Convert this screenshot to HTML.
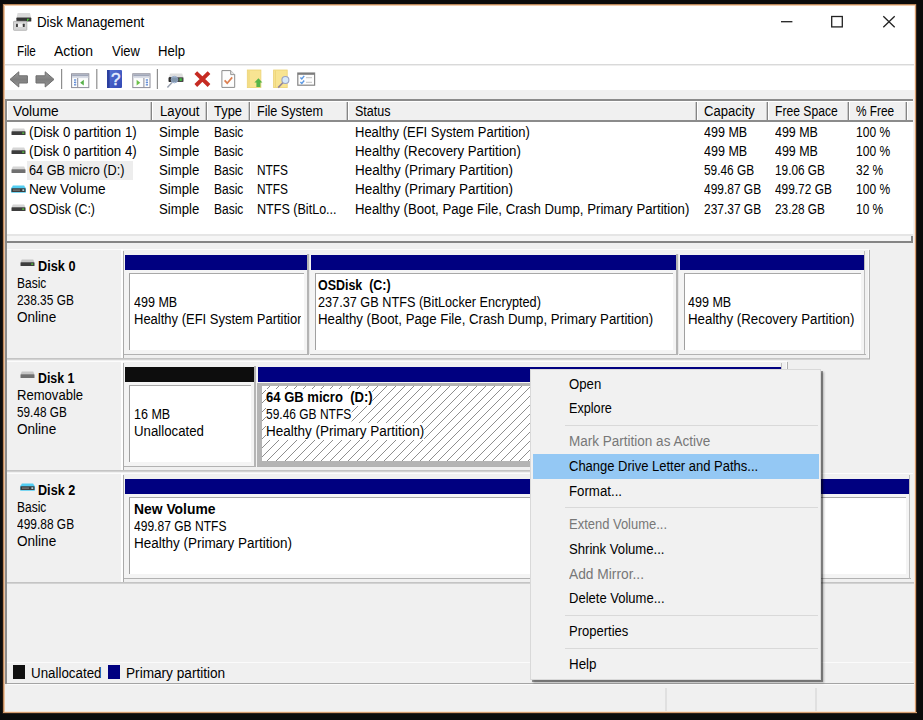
<!DOCTYPE html>
<html lang="en"><head><meta charset="utf-8"><title>Disk Management</title>
<style>
html,body{margin:0;padding:0}
body{width:923px;height:720px;background:#0b0b0b;position:relative;overflow:hidden;font-family:"Liberation Sans", sans-serif;font-size:13px;color:#000}
#w div,#w span.t,#w svg{position:absolute}
#w{position:absolute;left:0;top:0;width:923px;height:720px}
span.t{white-space:pre;display:block;transform-origin:0 0}
</style></head><body><div id="w">
<div style="left:3px;top:4px;width:913px;height:709px;background:#f0f0f0;"></div>
<div style="left:2px;top:4px;width:1px;height:710px;background:#20160f;"></div>
<div style="left:3px;top:4px;width:1px;height:709px;background:#bd875b;"></div>
<div style="left:4px;top:5px;width:1px;height:707px;background:#eac3a2;"></div>
<div style="left:3px;top:4px;width:914px;height:1px;background:#b98659;"></div>
<div style="left:4px;top:5px;width:912px;height:1px;background:#efcdb0;"></div>
<div style="left:914px;top:6px;width:1px;height:706px;background:#f6e6da;"></div>
<div style="left:915px;top:5px;width:1px;height:708px;background:#d59c6e;"></div>
<div style="left:916px;top:4px;width:1px;height:710px;background:#33251a;"></div>
<div style="left:5px;top:711px;width:910px;height:1px;background:#f4e2d4;"></div>
<div style="left:3px;top:712px;width:914px;height:1px;background:#d59c6e;"></div>
<div style="left:3px;top:713px;width:914px;height:1px;background:#2c2017;"></div>
<div style="left:5px;top:6px;width:909px;height:84px;background:#fff;"></div>
<div style="left:914px;top:6px;width:1px;height:84px;background:#fbeee4;"></div>
<div style="left:5px;top:64px;width:909px;height:1px;background:#d9d9d9;"></div>
<div style="left:5px;top:65px;width:909px;height:1px;background:#eeeeee;"></div>
<svg style="left:12px;top:12px" width="21" height="20" viewBox="12 12 21 20">
<path d="M17.6 13.1h12.4l1.1 4.7H16.5z" fill="#dadada"/>
<rect x="16.4" y="17.6" width="14.9" height="4" rx=".7" fill="#343434"/>
<path d="M27 18.7h2.2v1.1h-1.1v1.2H27z" fill="#4bbf36"/>
<rect x="13.5" y="21.3" width="13.3" height="9" rx=".6" fill="#d4d4d4" stroke="#ababab" stroke-width=".8"/>
<rect x="18" y="23.6" width="4.8" height="3.4" fill="#f2f2f2"/>
<rect x="16" y="23.7" width="1.9" height="3.3" rx=".5" fill="#3c3c3c"/><rect x="22.8" y="23.7" width="1.9" height="3.3" rx=".5" fill="#3c3c3c"/>
</svg>
<span class="t" style="left:37.20px;top:13.95px;font-size:14px;line-height:17px;transform:scaleX(0.9510);">Disk Management</span>
<svg style="left:776px;top:10px" width="130" height="24" viewBox="0 0 130 24">
<path d="M5 11.7h11.4" stroke="#222" stroke-width="1.3" fill="none"/>
<rect x="55.7" y="6.5" width="10.6" height="10.4" stroke="#222" stroke-width="1.3" fill="none"/>
<path d="M107.3 6.2l11.4 11M118.7 6.2l-11.4 11" stroke="#222" stroke-width="1.3" fill="none"/>
</svg>
<span class="t" style="left:16.50px;top:43.15px;font-size:14px;line-height:17px;transform:scaleX(0.8355);">File</span>
<span class="t" style="left:54.10px;top:43.15px;font-size:14px;line-height:17px;transform:scaleX(1.0020);">Action</span>
<span class="t" style="left:111.50px;top:43.15px;font-size:14px;line-height:17px;transform:scaleX(0.9238);">View</span>
<span class="t" style="left:158.10px;top:43.15px;font-size:14px;line-height:17px;transform:scaleX(0.9411);">Help</span>
<svg style="left:5px;top:66px" width="320" height="24" viewBox="5 66 320 24">
<defs>
<linearGradient id="ga" x1="0" y1="0" x2="0" y2="1"><stop offset="0" stop-color="#9a9a9a"/><stop offset=".5" stop-color="#7e7e7e"/><stop offset="1" stop-color="#959595"/></linearGradient>
<linearGradient id="gh" x1="0" y1="0" x2="1" y2="1"><stop offset="0" stop-color="#5a74d6"/><stop offset="1" stop-color="#3148b4"/></linearGradient>
</defs>
<!-- back / forward arrows -->
<path d="M10 79.4l8.8-7.6v4h8.6v7.2h-8.6v4z" fill="url(#ga)" stroke="#6e6e6e" stroke-width="1" stroke-linejoin="round"/>
<path d="M54 79.4l-8.8-7.6v4h-9.2v7.2h9.2v4z" fill="url(#ga)" stroke="#6e6e6e" stroke-width="1" stroke-linejoin="round"/>
<rect x="61" y="69" width="1.2" height="20" fill="#8e8e8e"/>
<!-- console tree -->
<rect x="71.6" y="73.8" width="17.2" height="13.8" fill="#fdfdfd" stroke="#8c8c98" stroke-width="1"/>
<rect x="72.1" y="74.3" width="16.2" height="2.2" fill="#9fa6b8"/>
<rect x="72.1" y="76.5" width="16.2" height="1.6" fill="#d8dce6"/>
<rect x="77.2" y="78" width="1" height="9.2" fill="#8c8c98"/>
<rect x="74" y="79.4" width="2.2" height="1.2" fill="#4a7bd0"/><rect x="74" y="81.8" width="2.2" height="1.2" fill="#4a7bd0"/><rect x="74" y="84.2" width="2.2" height="1.2" fill="#4a7bd0"/>
<rect x="74.8" y="79.4" width=".7" height="6" fill="#8fb0e6"/>
<path d="M83.8 79.8v5.8l-3.7-2.9z" fill="#58b04a"/>
<rect x="96.2" y="69" width="1.2" height="20" fill="#8e8e8e"/>
<!-- help -->
<rect x="107" y="70" width="15" height="18" rx="1" fill="url(#gh)"/>
<rect x="107" y="70" width="2.6" height="18" fill="#2b3f9e"/>
<text x="115.8" y="85.2" font-family="Liberation Sans, sans-serif" font-size="17" fill="#e6ecff" stroke="#e6ecff" stroke-width=".5" text-anchor="middle">?</text>
<!-- action pane -->
<rect x="132.8" y="73.8" width="17.2" height="13.8" fill="#fdfdfd" stroke="#8c8c98" stroke-width="1"/>
<rect x="133.3" y="74.3" width="16.2" height="2.2" fill="#9fa6b8"/>
<rect x="133.3" y="76.5" width="16.2" height="1.6" fill="#d8dce6"/>
<rect x="143.4" y="78" width="1" height="9.2" fill="#8c8c98"/>
<rect x="145.8" y="79.4" width="2.2" height="1.2" fill="#4a7bd0"/><rect x="145.8" y="81.8" width="2.2" height="1.2" fill="#4a7bd0"/><rect x="145.8" y="84.2" width="2.2" height="1.2" fill="#4a7bd0"/>
<rect x="146.6" y="79.4" width=".7" height="6" fill="#8fb0e6"/>
<path d="M136.6 79.8v5.8l3.7-2.9z" fill="#6cc04a"/>
<rect x="156.8" y="69" width="1.2" height="20" fill="#8e8e8e"/>
<!-- drive + magnifier -->
<path d="M170.2 73.4h12l1.3 4H168.8z" fill="#dedede"/>
<rect x="168.7" y="77.3" width="14.8" height="4.7" rx=".7" fill="#4a4a4a"/>
<rect x="168.7" y="77.3" width="3" height="4.7" rx=".7" fill="#2e2e2e"/>
<rect x="179.6" y="78.3" width="2.2" height="2.6" fill="#3fc23f"/>
<circle cx="174.4" cy="79.6" r="3.3" fill="#a9c9ee" fill-opacity=".6" stroke="#93a6c6" stroke-width=".9"/>
<path d="M172 82.6l-4.6 4.8" stroke="#9aa2b0" stroke-width="1.5"/>
<!-- red X -->
<path d="M195.8 72.7l13.2 12.8M209 72.7l-13.2 12.8" stroke="#c62b22" stroke-width="3.9" fill="none"/>
<!-- document + check -->
<path d="M221.9 70.6h8.8l4 4v12.8h-12.8z" fill="#fdfdfd" stroke="#8c8c8c" stroke-width="1"/>
<path d="M230.7 70.6v4h4" fill="#e8e8e8" stroke="#8c8c8c" stroke-width=".9"/>
<path d="M224.6 80.4l2.6 2.8 5-5.8" fill="none" stroke="#dc7f50" stroke-width="1.7"/>
<!-- folder + arrow -->
<rect x="247.3" y="70" width="13.6" height="17.6" fill="#f8e492" stroke="#ecd274" stroke-width=".8"/>
<rect x="248.6" y="70.6" width=".8" height="16.4" fill="#ecd274"/>
<path d="M258.4 78.2l4 4.3h-2v4.4h-4v-4.4h-2z" fill="#56b548"/>
<!-- folder + magnifier -->
<rect x="273.6" y="70" width="13.6" height="17.6" fill="#f8e492" stroke="#ecd274" stroke-width=".8"/>
<rect x="274.9" y="70.6" width=".8" height="16.4" fill="#ecd274"/>
<circle cx="285.4" cy="80" r="3.5" fill="#d6e9fa" stroke="#9aa2c4" stroke-width="1.1"/>
<path d="M282.8 82.8l-4.6 4.8" stroke="#93859a" stroke-width="1.6"/>
<!-- checklist -->
<rect x="297.8" y="73" width="16.8" height="12.2" fill="#fdfdfd" stroke="#868686" stroke-width="1.2"/>
<rect x="297.8" y="73" width="16.8" height="1.8" fill="#7c7c7c"/>
<path d="M300.4 77.4l1.4 1.5 2.4-3M300.4 82l1.4 1.5 2.4-3" fill="none" stroke="#5a98e4" stroke-width="1.4"/>
<rect x="306" y="77.2" width="6" height="1" fill="#c2c2c2"/><rect x="306" y="81.8" width="6" height="1" fill="#c2c2c2"/>
</svg>

<div style="left:5px;top:99px;width:909px;height:2px;background:#8b8b8b;"></div>
<div style="left:5px;top:99px;width:2px;height:144px;background:#8b8b8b;"></div>
<div style="left:7px;top:101px;width:906px;height:19px;background:#f0f0f0;"></div>
<div style="left:7px;top:101px;width:906px;height:1px;background:#fff;"></div>
<div style="left:7px;top:101px;width:1px;height:19px;background:#fff;"></div>
<div style="left:7px;top:122px;width:906px;height:112px;background:#fff;"></div>
<div style="left:7px;top:120px;width:906px;height:2px;background:#8b8b8b;"></div>
<div style="left:151px;top:102px;width:1px;height:18px;background:#858585;"></div>
<div style="left:150px;top:102px;width:1px;height:18px;background:#c9c9c9;"></div>
<div style="left:152px;top:101px;width:1px;height:19px;background:#fff;"></div>
<div style="left:206px;top:102px;width:1px;height:18px;background:#858585;"></div>
<div style="left:205px;top:102px;width:1px;height:18px;background:#c9c9c9;"></div>
<div style="left:207px;top:101px;width:1px;height:19px;background:#fff;"></div>
<div style="left:249px;top:102px;width:1px;height:18px;background:#858585;"></div>
<div style="left:248px;top:102px;width:1px;height:18px;background:#c9c9c9;"></div>
<div style="left:250px;top:101px;width:1px;height:19px;background:#fff;"></div>
<div style="left:347px;top:102px;width:1px;height:18px;background:#858585;"></div>
<div style="left:346px;top:102px;width:1px;height:18px;background:#c9c9c9;"></div>
<div style="left:348px;top:101px;width:1px;height:19px;background:#fff;"></div>
<div style="left:696px;top:102px;width:1px;height:18px;background:#858585;"></div>
<div style="left:695px;top:102px;width:1px;height:18px;background:#c9c9c9;"></div>
<div style="left:697px;top:101px;width:1px;height:19px;background:#fff;"></div>
<div style="left:767px;top:102px;width:1px;height:18px;background:#858585;"></div>
<div style="left:766px;top:102px;width:1px;height:18px;background:#c9c9c9;"></div>
<div style="left:768px;top:101px;width:1px;height:19px;background:#fff;"></div>
<div style="left:848px;top:102px;width:1px;height:18px;background:#858585;"></div>
<div style="left:847px;top:102px;width:1px;height:18px;background:#c9c9c9;"></div>
<div style="left:849px;top:101px;width:1px;height:19px;background:#fff;"></div>
<div style="left:906px;top:102px;width:1px;height:18px;background:#858585;"></div>
<div style="left:905px;top:102px;width:1px;height:18px;background:#c9c9c9;"></div>
<div style="left:907px;top:101px;width:1px;height:19px;background:#fff;"></div>
<span class="t" style="left:13.25px;top:103.15px;font-size:14px;line-height:17px;transform:scaleX(0.9796);">Volume</span>
<span class="t" style="left:159.50px;top:103.15px;font-size:14px;line-height:17px;transform:scaleX(0.9394);">Layout</span>
<span class="t" style="left:214.00px;top:103.15px;font-size:14px;line-height:17px;transform:scaleX(0.9223);">Type</span>
<span class="t" style="left:257.00px;top:103.15px;font-size:14px;line-height:17px;transform:scaleX(0.9026);">File System</span>
<span class="t" style="left:354.50px;top:103.15px;font-size:14px;line-height:17px;transform:scaleX(0.8941);">Status</span>
<span class="t" style="left:703.70px;top:103.15px;font-size:14px;line-height:17px;transform:scaleX(0.9326);">Capacity</span>
<span class="t" style="left:774.80px;top:103.15px;font-size:14px;line-height:17px;transform:scaleX(0.8663);">Free Space</span>
<span class="t" style="left:855.90px;top:103.15px;font-size:14px;line-height:17px;transform:scaleX(0.8465);">% Free</span>
<div style="left:27px;top:161px;width:106px;height:19px;background:#ededed;"></div>
<svg style="left:11.2px;top:127.6px" width="15" height="8" viewBox="0 0 15 8">
<path d="M1.8 .4h11.4l1.3 3H.5z" fill="#d6d6d6"/><rect x=".5" y="3.3" width="14" height="3.7" rx=".6" fill="#3d3d3d"/>
<rect x="11.2" y="4.4" width="2" height="1.4" fill="#55c83c"/></svg>
<span class="t" style="left:29.10px;top:123.75px;font-size:14px;line-height:17px;transform:scaleX(0.9481);">(Disk 0 partition 1)</span>
<span class="t" style="left:159.10px;top:123.75px;font-size:14px;line-height:17px;transform:scaleX(0.9393);">Simple</span>
<span class="t" style="left:213.80px;top:123.75px;font-size:14px;line-height:17px;transform:scaleX(0.8559);">Basic</span>
<span class="t" style="left:354.90px;top:123.75px;font-size:14px;line-height:17px;transform:scaleX(0.9284);">Healthy (EFI System Partition)</span>
<span class="t" style="left:703.60px;top:123.75px;font-size:14px;line-height:17px;transform:scaleX(0.8953);">499 MB</span>
<span class="t" style="left:774.80px;top:123.75px;font-size:14px;line-height:17px;transform:scaleX(0.8891);">499 MB</span>
<span class="t" style="left:855.60px;top:123.75px;font-size:14px;line-height:17px;transform:scaleX(0.8589);">100 %</span>
<svg style="left:11.2px;top:146.79999999999998px" width="15" height="8" viewBox="0 0 15 8">
<path d="M1.8 .4h11.4l1.3 3H.5z" fill="#d6d6d6"/><rect x=".5" y="3.3" width="14" height="3.7" rx=".6" fill="#3d3d3d"/>
<rect x="11.2" y="4.4" width="2" height="1.4" fill="#55c83c"/></svg>
<span class="t" style="left:29.10px;top:142.95px;font-size:14px;line-height:17px;transform:scaleX(0.9481);">(Disk 0 partition 4)</span>
<span class="t" style="left:159.10px;top:142.95px;font-size:14px;line-height:17px;transform:scaleX(0.9393);">Simple</span>
<span class="t" style="left:213.80px;top:142.95px;font-size:14px;line-height:17px;transform:scaleX(0.8559);">Basic</span>
<span class="t" style="left:354.90px;top:142.95px;font-size:14px;line-height:17px;transform:scaleX(0.9471);">Healthy (Recovery Partition)</span>
<span class="t" style="left:703.60px;top:142.95px;font-size:14px;line-height:17px;transform:scaleX(0.8953);">499 MB</span>
<span class="t" style="left:774.80px;top:142.95px;font-size:14px;line-height:17px;transform:scaleX(0.8891);">499 MB</span>
<span class="t" style="left:855.60px;top:142.95px;font-size:14px;line-height:17px;transform:scaleX(0.8589);">100 %</span>
<svg style="left:11.2px;top:166.0px" width="15" height="8" viewBox="0 0 15 8">
<path d="M1.8 .4h11.4l1.3 3H.5z" fill="#d6d6d6"/><rect x=".5" y="3.3" width="14" height="3.7" rx=".6" fill="#707070"/>
</svg>
<span class="t" style="left:29.10px;top:162.15px;font-size:14px;line-height:17px;transform:scaleX(0.9094);">64 GB micro (D:)</span>
<span class="t" style="left:159.10px;top:162.15px;font-size:14px;line-height:17px;transform:scaleX(0.9393);">Simple</span>
<span class="t" style="left:213.80px;top:162.15px;font-size:14px;line-height:17px;transform:scaleX(0.8559);">Basic</span>
<span class="t" style="left:257.40px;top:162.15px;font-size:14px;line-height:17px;transform:scaleX(0.8479);">NTFS</span>
<span class="t" style="left:354.90px;top:162.15px;font-size:14px;line-height:17px;transform:scaleX(0.9625);">Healthy (Primary Partition)</span>
<span class="t" style="left:703.60px;top:162.15px;font-size:14px;line-height:17px;transform:scaleX(0.8486);">59.46 GB</span>
<span class="t" style="left:774.80px;top:162.15px;font-size:14px;line-height:17px;transform:scaleX(0.8435);">19.06 GB</span>
<span class="t" style="left:855.60px;top:162.15px;font-size:14px;line-height:17px;transform:scaleX(0.8521);">32 %</span>
<svg style="left:11.2px;top:185.2px" width="15" height="8" viewBox="0 0 15 8">
<path d="M1.8 .4h11.4l1.3 3H.5z" fill="#52cdf2"/><rect x="0" y="2.6" width="15" height="5.2" rx=".8" fill="#52cdf2"/><rect x=".5" y="3.3" width="14" height="3.7" rx=".6" fill="#3d3d3d"/>
<rect x="2" y="4.6" width="7" height="1" fill="#8a8a8a"/><rect x="11.4" y="4.4" width="1.8" height="1.4" fill="#d0f4ff"/></svg>
<span class="t" style="left:29.10px;top:181.35px;font-size:14px;line-height:17px;transform:scaleX(0.9746);">New Volume</span>
<span class="t" style="left:159.10px;top:181.35px;font-size:14px;line-height:17px;transform:scaleX(0.9393);">Simple</span>
<span class="t" style="left:213.80px;top:181.35px;font-size:14px;line-height:17px;transform:scaleX(0.8559);">Basic</span>
<span class="t" style="left:257.40px;top:181.35px;font-size:14px;line-height:17px;transform:scaleX(0.8479);">NTFS</span>
<span class="t" style="left:354.90px;top:181.35px;font-size:14px;line-height:17px;transform:scaleX(0.9625);">Healthy (Primary Partition)</span>
<span class="t" style="left:703.60px;top:181.35px;font-size:14px;line-height:17px;transform:scaleX(0.8530);">499.87 GB</span>
<span class="t" style="left:774.80px;top:181.35px;font-size:14px;line-height:17px;transform:scaleX(0.8486);">499.72 GB</span>
<span class="t" style="left:855.60px;top:181.35px;font-size:14px;line-height:17px;transform:scaleX(0.8589);">100 %</span>
<svg style="left:11.2px;top:204.39999999999998px" width="15" height="8" viewBox="0 0 15 8">
<path d="M1.8 .4h11.4l1.3 3H.5z" fill="#d6d6d6"/><rect x=".5" y="3.3" width="14" height="3.7" rx=".6" fill="#3d3d3d"/>
<rect x="11.2" y="4.4" width="2" height="1.4" fill="#55c83c"/></svg>
<span class="t" style="left:29.10px;top:200.55px;font-size:14px;line-height:17px;transform:scaleX(0.8839);">OSDisk (C:)</span>
<span class="t" style="left:159.10px;top:200.55px;font-size:14px;line-height:17px;transform:scaleX(0.9393);">Simple</span>
<span class="t" style="left:213.80px;top:200.55px;font-size:14px;line-height:17px;transform:scaleX(0.8559);">Basic</span>
<span class="t" style="left:257.40px;top:200.55px;font-size:14px;line-height:17px;transform:scaleX(0.8975);">NTFS (BitLo...</span>
<span class="t" style="left:354.90px;top:200.55px;font-size:14px;line-height:17px;transform:scaleX(0.9443);">Healthy (Boot, Page File, Crash Dump, Primary Partition)</span>
<span class="t" style="left:703.60px;top:200.55px;font-size:14px;line-height:17px;transform:scaleX(0.8530);">237.37 GB</span>
<span class="t" style="left:774.80px;top:200.55px;font-size:14px;line-height:17px;transform:scaleX(0.8435);">23.28 GB</span>
<span class="t" style="left:855.60px;top:200.55px;font-size:14px;line-height:17px;transform:scaleX(0.8521);">10 %</span>
<div style="left:7px;top:234px;width:906px;height:2px;background:#e5e5e5;"></div>
<div style="left:7px;top:236px;width:906px;height:5px;background:#f5f5f5;"></div>
<div style="left:5px;top:241px;width:908px;height:2px;background:#858585;"></div>
<div style="left:911px;top:236px;width:2px;height:7px;background:#858585;"></div>
<div style="left:913px;top:99px;width:1px;height:144px;background:#f3f3f3;"></div>
<div style="left:5px;top:243px;width:2px;height:441px;background:#8b8b8b;"></div>
<div style="left:7px;top:683px;width:907px;height:1px;background:#a4a4a4;"></div>
<div style="left:7px;top:684px;width:907px;height:1px;background:#fbfbfb;"></div>
<div style="left:7px;top:662px;width:906px;height:1px;background:#fbfbfb;"></div>
<div style="left:7px;top:249px;width:862px;height:1px;background:#fcfcfc;"></div>
<div style="left:121px;top:249px;width:2px;height:109px;background:#fff;"></div>
<div style="left:123px;top:251px;width:1px;height:107px;background:#aaaaaa;"></div>
<div style="left:7px;top:358px;width:863px;height:1px;background:#c4c4c4;"></div>
<div style="left:7px;top:359px;width:863px;height:1px;background:#d2d2d2;"></div>
<div style="left:869px;top:250px;width:1px;height:109px;background:#b0b0b0;"></div>
<div style="left:868px;top:250px;width:1px;height:108px;background:#fafafa;"></div>
<span class="t" style="left:37.70px;top:258.35px;font-size:14px;line-height:17px;font-weight:bold;transform:scaleX(0.9091);">Disk 0</span>
<svg style="left:19.6px;top:259.3px" width="15" height="8" viewBox="0 0 15 8">
<path d="M1.8 .4h11.4l1.3 3H.5z" fill="#c6c6c6"/><rect x=".5" y="3.3" width="14" height="3.7" rx=".6" fill="#3d3d3d"/>
<rect x="11.2" y="4.4" width="2" height="1.4" fill="#55c83c"/></svg>
<span class="t" style="left:17.10px;top:275.25px;font-size:14px;line-height:17px;transform:scaleX(0.8559);">Basic</span>
<span class="t" style="left:17.10px;top:292.15px;font-size:14px;line-height:17px;transform:scaleX(0.8486);">238.35 GB</span>
<span class="t" style="left:17.10px;top:309.05px;font-size:14px;line-height:17px;transform:scaleX(0.9686);">Online</span>
<div style="left:124px;top:251px;width:741px;height:104px;background:#f2f2f2;"></div>
<div style="left:124px;top:251px;width:184px;height:103px;background:#f4f4f4;"></div>
<div style="left:124px;top:251px;width:184px;height:4px;background:#f1f1f1;"></div>
<div style="left:124px;top:354px;width:185px;height:1px;background:#b2b2b2;"></div>
<div style="left:125px;top:255px;width:182px;height:15px;background:#000080;"></div>
<div style="left:129px;top:273px;width:175px;height:77px;background:#fff;border-top:1px solid #a8a8a8;border-left:1px solid #a0a0a0;box-sizing:border-box;"></div>
<div style="left:307px;top:254px;width:2px;height:100px;background:#b4b4b4;"></div>
<div style="left:309px;top:254px;width:1px;height:100px;background:#e6e6e6;"></div>
<div style="left:310px;top:251px;width:367px;height:103px;background:#f4f4f4;"></div>
<div style="left:310px;top:251px;width:367px;height:4px;background:#f1f1f1;"></div>
<div style="left:310px;top:354px;width:368px;height:1px;background:#b2b2b2;"></div>
<div style="left:311px;top:255px;width:365px;height:15px;background:#000080;"></div>
<div style="left:315px;top:273px;width:358px;height:77px;background:#fff;border-top:1px solid #a8a8a8;border-left:1px solid #a0a0a0;box-sizing:border-box;"></div>
<div style="left:676px;top:254px;width:2px;height:100px;background:#b4b4b4;"></div>
<div style="left:678px;top:254px;width:1px;height:100px;background:#e6e6e6;"></div>
<div style="left:679px;top:251px;width:186px;height:103px;background:#f4f4f4;"></div>
<div style="left:679px;top:251px;width:186px;height:4px;background:#f1f1f1;"></div>
<div style="left:679px;top:354px;width:187px;height:1px;background:#b2b2b2;"></div>
<div style="left:680px;top:255px;width:184px;height:15px;background:#000080;"></div>
<div style="left:684px;top:273px;width:177px;height:77px;background:#fff;border-top:1px solid #a8a8a8;border-left:1px solid #a0a0a0;box-sizing:border-box;"></div>
<div style="left:864px;top:251px;width:1px;height:103px;background:#bdbdbd;"></div>
<span class="t" style="left:133.70px;top:294.25px;font-size:14px;line-height:17px;transform:scaleX(0.8953);">499 MB</span>
<span class="t" style="left:133.70px;top:311.25px;font-size:14px;line-height:17px;transform:scaleX(0.9284);width:180.4px;overflow:hidden;">Healthy (EFI System Partition)</span>
<span class="t" style="left:318.30px;top:277.15px;font-size:14px;line-height:17px;font-weight:bold;transform:scaleX(0.8888);">OSDisk  (C:)</span>
<span class="t" style="left:318.30px;top:294.25px;font-size:14px;line-height:17px;transform:scaleX(0.9066);">237.37 GB NTFS (BitLocker Encrypted)</span>
<span class="t" style="left:318.30px;top:311.25px;font-size:14px;line-height:17px;transform:scaleX(0.9466);">Healthy (Boot, Page File, Crash Dump, Primary Partition)</span>
<span class="t" style="left:687.70px;top:294.25px;font-size:14px;line-height:17px;transform:scaleX(0.8953);">499 MB</span>
<span class="t" style="left:687.70px;top:311.25px;font-size:14px;line-height:17px;transform:scaleX(0.9505);">Healthy (Recovery Partition)</span>
<div style="left:7px;top:361px;width:780px;height:1px;background:#fcfcfc;"></div>
<div style="left:121px;top:361px;width:2px;height:109px;background:#fff;"></div>
<div style="left:123px;top:363px;width:1px;height:107px;background:#aaaaaa;"></div>
<div style="left:7px;top:470px;width:781px;height:1px;background:#c4c4c4;"></div>
<div style="left:7px;top:471px;width:781px;height:1px;background:#d2d2d2;"></div>
<div style="left:787px;top:362px;width:1px;height:109px;background:#b0b0b0;"></div>
<div style="left:786px;top:362px;width:1px;height:108px;background:#fafafa;"></div>
<span class="t" style="left:37.70px;top:370.35px;font-size:14px;line-height:17px;font-weight:bold;transform:scaleX(0.8824);">Disk 1</span>
<svg style="left:19.6px;top:371.3px" width="15" height="8" viewBox="0 0 15 8">
<path d="M1.8 .4h11.4l1.3 3H.5z" fill="#c6c6c6"/><rect x=".5" y="3.3" width="14" height="3.7" rx=".6" fill="#707070"/>
</svg>
<span class="t" style="left:17.10px;top:387.25px;font-size:14px;line-height:17px;transform:scaleX(0.9332);">Removable</span>
<span class="t" style="left:17.10px;top:404.15px;font-size:14px;line-height:17px;transform:scaleX(0.8418);">59.48 GB</span>
<span class="t" style="left:17.10px;top:421.05px;font-size:14px;line-height:17px;transform:scaleX(0.9686);">Online</span>
<div style="left:124px;top:363px;width:659px;height:104px;background:#f2f2f2;"></div>
<div style="left:124px;top:363px;width:131px;height:103px;background:#f4f4f4;"></div>
<div style="left:124px;top:363px;width:131px;height:4px;background:#f1f1f1;"></div>
<div style="left:124px;top:466px;width:132px;height:1px;background:#b2b2b2;"></div>
<div style="left:125px;top:367px;width:129px;height:15px;background:#0d0d0d;"></div>
<div style="left:129px;top:385px;width:122px;height:77px;background:#fff;border-top:1px solid #a8a8a8;border-left:1px solid #a0a0a0;box-sizing:border-box;"></div>
<div style="left:254px;top:366px;width:2px;height:100px;background:#b4b4b4;"></div>
<div style="left:257px;top:363px;width:525px;height:103px;background:#f4f4f4;"></div>
<div style="left:257px;top:363px;width:525px;height:4px;background:#f1f1f1;"></div>
<div style="left:257px;top:466px;width:526px;height:1px;background:#b2b2b2;"></div>
<div style="left:258px;top:367px;width:523px;height:15px;background:#000080;"></div>
<div style="left:257px;top:382.5px;width:525px;height:83.5px;background:#b4b4b4;"></div>
<div style="left:261.5px;top:386px;width:516px;height:75px;background:#fff repeating-linear-gradient(135deg,#fff 0,#fff 5.3px,#8e8e8e 5.3px,#8e8e8e 6.36px);"></div>
<div style="left:781px;top:363px;width:1px;height:103px;background:#bdbdbd;"></div>
<span class="t" style="left:133.50px;top:406.25px;font-size:14px;line-height:17px;transform:scaleX(0.8945);">16 MB</span>
<span class="t" style="left:133.50px;top:423.25px;font-size:14px;line-height:17px;transform:scaleX(0.9454);">Unallocated</span>
<span class="t" style="left:265.60px;top:389.35px;font-size:14px;line-height:17px;font-weight:bold;background:#fff;transform:scaleX(0.9321);">64 GB micro  (D:)</span>
<span class="t" style="left:265.60px;top:406.45px;font-size:14px;line-height:17px;background:#fff;transform:scaleX(0.8555);">59.46 GB NTFS</span>
<span class="t" style="left:265.60px;top:423.45px;font-size:14px;line-height:17px;background:#fff;transform:scaleX(0.9643);">Healthy (Primary Partition)</span>
<div style="left:7px;top:473px;width:906px;height:1px;background:#fcfcfc;"></div>
<div style="left:121px;top:473px;width:2px;height:109px;background:#fff;"></div>
<div style="left:123px;top:475px;width:1px;height:107px;background:#aaaaaa;"></div>
<div style="left:7px;top:582px;width:907px;height:1px;background:#c4c4c4;"></div>
<div style="left:7px;top:583px;width:907px;height:1px;background:#d2d2d2;"></div>
<span class="t" style="left:37.70px;top:482.35px;font-size:14px;line-height:17px;font-weight:bold;transform:scaleX(0.9018);">Disk 2</span>
<svg style="left:19.6px;top:483.3px" width="15" height="8" viewBox="0 0 15 8">
<path d="M1.8 .4h11.4l1.3 3H.5z" fill="#52cdf2"/><rect x="0" y="2.6" width="15" height="5.2" rx=".8" fill="#52cdf2"/><rect x=".5" y="3.3" width="14" height="3.7" rx=".6" fill="#3d3d3d"/>
<rect x="2" y="4.6" width="7" height="1" fill="#8a8a8a"/><rect x="11.4" y="4.4" width="1.8" height="1.4" fill="#d0f4ff"/></svg>
<span class="t" style="left:17.10px;top:499.25px;font-size:14px;line-height:17px;transform:scaleX(0.8559);">Basic</span>
<span class="t" style="left:17.10px;top:516.15px;font-size:14px;line-height:17px;transform:scaleX(0.8530);">499.88 GB</span>
<span class="t" style="left:17.10px;top:533.05px;font-size:14px;line-height:17px;transform:scaleX(0.9686);">Online</span>
<div style="left:124px;top:475px;width:785px;height:104px;background:#f2f2f2;"></div>
<div style="left:124px;top:475px;width:786px;height:103px;background:#f4f4f4;"></div>
<div style="left:124px;top:475px;width:786px;height:4px;background:#f1f1f1;"></div>
<div style="left:124px;top:578px;width:787px;height:1px;background:#b2b2b2;"></div>
<div style="left:125px;top:479px;width:784px;height:15px;background:#000080;"></div>
<div style="left:129px;top:497px;width:777px;height:77px;background:#fff;border-top:1px solid #a8a8a8;border-left:1px solid #a0a0a0;box-sizing:border-box;"></div>
<div style="left:909px;top:475px;width:1px;height:104px;background:#bdbdbd;"></div>
<span class="t" style="left:133.50px;top:501.15px;font-size:14px;line-height:17px;font-weight:bold;transform:scaleX(0.9914);">New Volume</span>
<span class="t" style="left:133.50px;top:518.25px;font-size:14px;line-height:17px;transform:scaleX(0.8613);">499.87 GB NTFS</span>
<span class="t" style="left:133.50px;top:535.25px;font-size:14px;line-height:17px;transform:scaleX(0.9625);">Healthy (Primary Partition)</span>
<div style="left:13px;top:665px;width:12px;height:14px;background:#111;"></div>
<span class="t" style="left:30.50px;top:664.65px;font-size:14px;line-height:17px;transform:scaleX(0.9535);">Unallocated</span>
<div style="left:108px;top:665px;width:12px;height:14px;background:#000080;"></div>
<span class="t" style="left:125.50px;top:664.65px;font-size:14px;line-height:17px;transform:scaleX(0.9733);">Primary partition</span>
<div style="left:665px;top:688px;width:2px;height:23px;background:#e0e0e0;"></div>
<div style="left:815px;top:688px;width:2px;height:23px;background:#e0e0e0;"></div>
<div style="left:530px;top:369px;width:291px;height:311px;background:#f1f1f1;border:1px solid #d9d9d9;box-sizing:border-box;box-shadow:2px 2px 0 rgba(0,0,0,.36),3px 3px 2px rgba(0,0,0,.25)"></div>
<div style="left:533px;top:454px;width:286px;height:25px;background:#94c8f4;"></div>
<div style="left:565px;top:425px;width:253px;height:1px;background:#d9d9d9;"></div>
<div style="left:565px;top:507px;width:253px;height:1px;background:#d9d9d9;"></div>
<div style="left:565px;top:615px;width:253px;height:1px;background:#d9d9d9;"></div>
<div style="left:565px;top:648px;width:253px;height:1px;background:#d9d9d9;"></div>
<span class="t" style="left:569.00px;top:375.55px;font-size:14px;line-height:17px;transform:scaleX(0.9401);">Open</span>
<span class="t" style="left:569.00px;top:400.35px;font-size:14px;line-height:17px;transform:scaleX(0.9038);">Explore</span>
<span class="t" style="left:569.00px;top:433.15px;font-size:14px;line-height:17px;color:#777;transform:scaleX(0.9653);">Mark Partition as Active</span>
<span class="t" style="left:569.00px;top:458.05px;font-size:14px;line-height:17px;transform:scaleX(0.9274);">Change Drive Letter and Paths...</span>
<span class="t" style="left:569.00px;top:482.95px;font-size:14px;line-height:17px;transform:scaleX(0.9462);">Format...</span>
<span class="t" style="left:569.00px;top:515.85px;font-size:14px;line-height:17px;color:#777;transform:scaleX(0.9259);">Extend Volume...</span>
<span class="t" style="left:569.00px;top:540.55px;font-size:14px;line-height:17px;transform:scaleX(0.9368);">Shrink Volume...</span>
<span class="t" style="left:569.00px;top:565.55px;font-size:14px;line-height:17px;color:#777;transform:scaleX(0.9836);">Add Mirror...</span>
<span class="t" style="left:569.00px;top:590.15px;font-size:14px;line-height:17px;transform:scaleX(0.9296);">Delete Volume...</span>
<span class="t" style="left:569.00px;top:622.75px;font-size:14px;line-height:17px;transform:scaleX(0.9285);">Properties</span>
<span class="t" style="left:569.00px;top:655.65px;font-size:14px;line-height:17px;transform:scaleX(0.9550);">Help</span>
</div></body></html>
